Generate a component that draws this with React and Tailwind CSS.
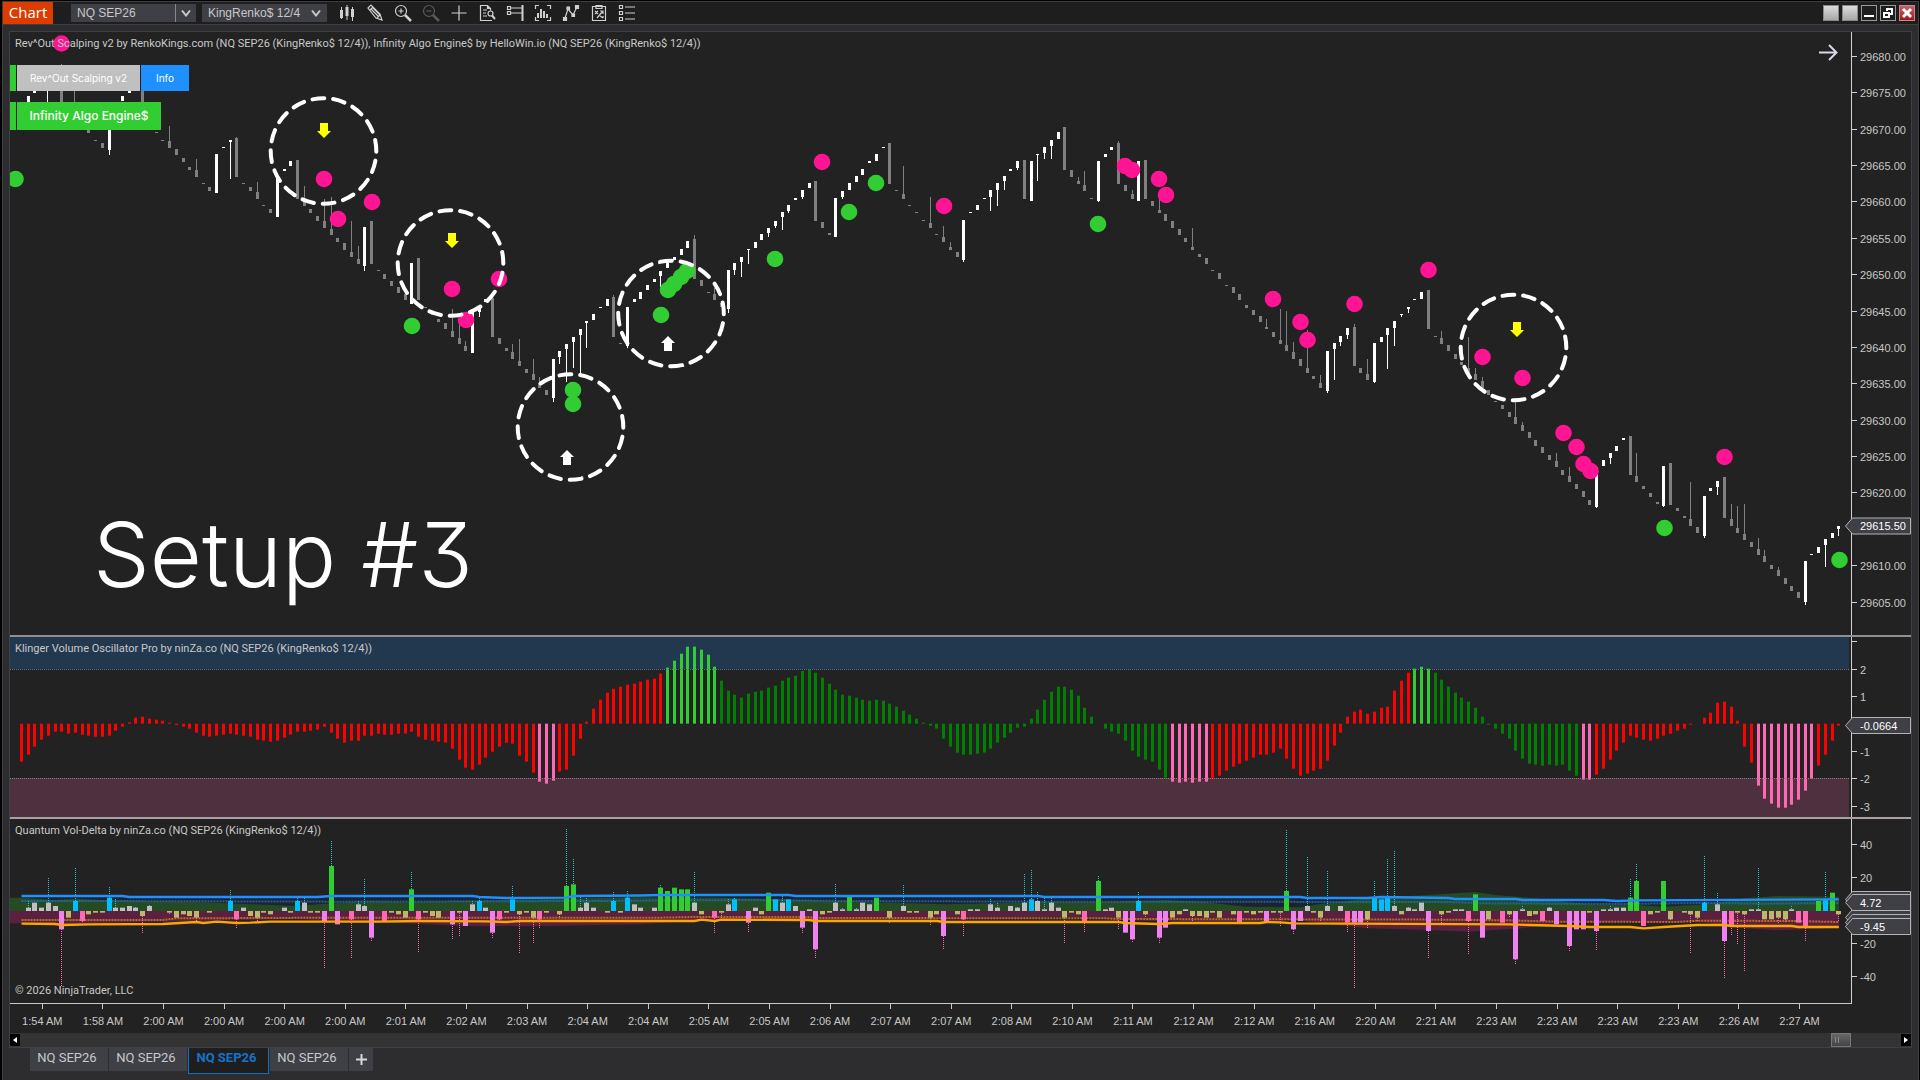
import React, { useState } from 'react'

const BAR_START = 21.5
const BAR_STEP = 6.731
const barX = i => BAR_START + i * BAR_STEP
// wicks are one pixel wide, so they sit on whole pixels
const wickX = i => Math.floor(barX(i)) + 0.5

// rows: [bar index, body top, body bottom, wick end]
const UP = [
  [1, 96, 102], [2, 90, 93], [13, 128, 150, 155], [15, 96, 101], [16, 90, 93], [29, 154, 193], [30, 147, 148],
  [31, 140, 142, 179], [38, 177, 217], [39, 169, 171], [40, 161, 166], [51, 227, 266, 271], [58, 263, 304],
  [67, 312, 353], [68, 308, 312, 317], [69, 299, 302], [79, 359, 398, 402], [80, 351, 357, 364], [81, 344, 349, 382],
  [82, 337, 342, 368], [83, 329, 335, 373], [84, 321, 323, 348], [85, 314, 320], [86, 307, 308], [87, 299, 306],
  [90, 307, 346, 348], [91, 299, 302], [92, 292, 299], [93, 285, 290], [94, 279, 282], [95, 271, 276, 287],
  [96, 262, 268], [97, 257, 260], [98, 249, 255], [99, 241, 248], [105, 270, 309, 313], [106, 263, 270, 275],
  [107, 257, 262, 277], [108, 249, 250, 264], [109, 242, 248], [110, 234, 240], [111, 228, 233, 237],
  [112, 221, 226, 228], [113, 212, 217, 230], [114, 205, 211, 213], [115, 198, 200], [116, 190, 197, 199],
  [117, 183, 188], [121, 198, 237], [122, 191, 197, 199], [123, 183, 190], [124, 176, 182], [125, 169, 175],
  [126, 161, 163], [127, 154, 161], [128, 147, 148], [140, 220, 260, 262], [141, 212, 213], [142, 205, 210],
  [143, 198, 199], [144, 190, 197, 211], [145, 183, 190, 206], [146, 176, 181, 190], [147, 169, 171],
  [148, 161, 168, 170], [150, 161, 201], [151, 154, 155, 181], [152, 147, 153, 159], [153, 140, 146, 159],
  [154, 132, 139], [160, 161, 201, 202], [161, 154, 157], [162, 147, 150], [166, 161, 201], [194, 351, 391, 393],
  [195, 343, 349, 380], [196, 336, 342, 346], [197, 328, 335, 339], [201, 343, 382, 383], [202, 337, 342],
  [203, 328, 335, 369], [204, 321, 328, 346], [205, 314, 315, 317], [206, 307, 309, 313], [207, 299, 300],
  [208, 292, 299], [234, 467, 507, 508], [235, 460, 466], [236, 453, 458, 464], [237, 446, 451], [238, 438, 440],
  [244, 466, 506, 507], [250, 496, 536, 538], [251, 488, 491], [252, 481, 487, 495], [265, 561, 602, 605],
  [266, 554, 555], [267, 547, 553], [268, 539, 545, 567], [269, 533, 538], [270, 526, 529, 536],
]

const DOWN = [
  [6, 90, 102, 64], [10, 130, 133], [11, 140, 141], [12, 143, 148], [18, 90, 102], [20, 132, 133], [21, 140, 141],
  [22, 141, 148, 126], [23, 149, 155], [24, 158, 162], [25, 167, 170], [26, 170, 177, 159], [27, 183, 184],
  [28, 187, 191], [32, 138, 177, 137], [33, 183, 184], [34, 187, 191], [35, 192, 199, 182], [36, 205, 206],
  [37, 209, 213], [41, 160, 199], [42, 199, 206, 186], [43, 209, 213], [44, 216, 221], [45, 221, 228, 199],
  [46, 229, 235, 197], [47, 238, 242], [48, 243, 250], [49, 252, 257, 221], [50, 259, 264, 246], [52, 221, 264],
  [53, 270, 271], [54, 274, 279], [55, 281, 286], [56, 287, 293], [57, 294, 300], [59, 258, 300], [60, 307, 308],
  [61, 311, 315], [62, 319, 322], [63, 323, 329], [64, 331, 337, 309], [65, 338, 344, 320], [66, 346, 351, 341],
  [70, 298, 337], [71, 338, 344], [72, 348, 351], [73, 352, 359, 344], [74, 361, 366, 339], [75, 369, 373],
  [76, 374, 380, 359], [77, 383, 388, 377], [78, 390, 395], [88, 297, 337, 295], [89, 343, 344], [100, 239, 279, 235],
  [101, 280, 286], [102, 292, 293], [103, 294, 300, 288], [104, 303, 307], [118, 181, 221], [119, 222, 228],
  [120, 233, 235], [129, 143, 184], [130, 190, 191], [131, 194, 199, 166], [132, 205, 206], [133, 212, 213],
  [134, 220, 221], [135, 223, 228, 197], [136, 234, 235], [137, 237, 242, 226], [138, 247, 250, 242],
  [139, 252, 257], [149, 160, 199], [155, 127, 170], [156, 170, 177], [157, 181, 184, 177], [158, 185, 191, 171],
  [159, 198, 199], [163, 143, 184, 141], [164, 185, 191], [165, 194, 199, 190], [167, 160, 199], [168, 201, 206],
  [169, 210, 213, 198], [170, 214, 221], [171, 221, 228], [172, 229, 235], [173, 238, 242], [174, 247, 250, 228],
  [175, 254, 257], [176, 258, 264], [177, 270, 271], [178, 273, 279], [179, 285, 286], [180, 287, 293],
  [181, 294, 300], [182, 305, 308], [183, 310, 315], [184, 316, 322], [185, 327, 329, 319], [186, 332, 337],
  [187, 340, 344, 309], [188, 345, 351, 311], [189, 352, 359, 342], [190, 359, 366], [191, 368, 373, 330],
  [192, 376, 379], [193, 383, 388, 375], [198, 327, 366, 324], [199, 368, 373], [200, 374, 380, 359],
  [209, 290, 329], [210, 336, 337], [211, 338, 344, 331], [212, 345, 351], [213, 354, 359], [214, 362, 365],
  [215, 368, 374, 337], [216, 374, 380, 368], [217, 381, 388, 377], [218, 390, 395], [219, 401, 402],
  [220, 405, 409], [221, 412, 417], [222, 417, 424, 402], [223, 425, 431, 422], [224, 432, 438], [225, 440, 446],
  [226, 447, 453], [227, 455, 460], [228, 461, 467, 453], [229, 470, 475], [230, 476, 482, 467], [231, 484, 489],
  [232, 491, 497], [233, 500, 505], [239, 436, 475], [240, 476, 482, 453], [241, 486, 489], [242, 493, 497],
  [243, 502, 504], [245, 463, 505], [246, 508, 511], [247, 516, 518], [248, 519, 526, 482], [249, 527, 533],
  [253, 477, 518], [254, 519, 526, 504], [255, 528, 533, 506], [256, 534, 540, 504], [257, 542, 547],
  [258, 549, 555, 538], [259, 556, 562, 550], [260, 565, 569], [261, 570, 576, 567], [262, 578, 584],
  [263, 586, 591], [264, 592, 598],
]

const PINK_DOTS = [
  [61.5, 43.5], [324, 179], [372, 202], [338, 219], [452, 289], [499, 279], [466, 320], [822, 162],
  [944, 206], [1125, 166], [1132, 170], [1159, 179], [1166, 195], [1273, 299], [1300.5, 322], [1307.5, 340],
  [1354.5, 304], [1428.5, 270], [1482.5, 357], [1522.5, 378], [1563.5, 433], [1576.5, 447], [1583.5, 464], [1590.5, 471],
  [1724.5, 457],
]

const GREEN_DOTS = [
  [15.5, 179], [412, 326], [573, 390], [573, 404], [661, 315], [668, 290], [674, 284], [681, 277], [687, 271],
  [775, 259], [849, 212], [876, 183], [1098, 224], [1664.5, 528], [1839.5, 560],
]

const RINGS = [[323.5, 151], [450.5, 263], [570.5, 427], [671, 313.5], [1513.5, 347.5]]
const SELL_ARROWS = [[324, 123], [452, 233], [1517, 322]]
const BUY_ARROWS = [[567, 450], [668, 336]]

// oscillator columns, bottom or top end of each bar in thirds of a pixel
const KLINGER_ZERO = 281
const KLINGER = [
  395, 374, 350, 329, 317, 305, 305, 311, 308, 314, 317, 320, 320, 317, 302, 290, 277, 263, 260, 266, 269, 272, 278,
  285, 290, 296, 308, 317, 320, 317, 314, 311, 314, 317, 320, 329, 332, 335, 332, 323, 314, 305, 305, 302, 299, 290,
  308, 326, 338, 332, 332, 317, 317, 311, 314, 314, 311, 311, 305, 320, 329, 332, 335, 338, 356, 389, 413, 419, 404,
  383, 365, 350, 338, 341, 377, 395, 428, 455, 461, 452, 425, 419, 377, 326, 275, 236, 209, 188, 176, 170, 164, 161,
  155, 149, 146, 131, 113, 92, 71, 50, 50, 59, 74, 110, 152, 182, 194, 203, 191, 185, 182, 173, 167, 152, 143, 137,
  123, 119, 128, 143, 161, 179, 194, 197, 203, 209, 212, 209, 212, 221, 230, 242, 254, 266, 278, 287, 296, 326, 350,
  368, 374, 374, 371, 368, 356, 338, 323, 308, 293, 290, 266, 239, 209, 185, 170, 170, 179, 197, 233, 260, 281, 296,
  305, 311, 332, 362, 380, 389, 395, 419, 443, 455, 458, 455, 458, 455, 455, 446, 437, 422, 410, 401, 392, 383, 374,
  374, 368, 356, 386, 416, 437, 431, 422, 416, 392, 347, 308, 260, 245, 239, 251, 245, 233, 230, 182, 152, 128, 116,
  110, 116, 128, 149, 170, 188, 203, 215, 233, 260, 284, 296, 311, 326, 362, 386, 401, 404, 407, 404, 407, 404, 422,
  437, 449, 449, 434, 416, 389, 362, 338, 317, 323, 329, 332, 326, 317, 311, 302, 296, 284, 281, 263, 248, 218, 215,
  230, 272, 350, 398, 467, 506, 521, 533, 533, 524, 509, 482, 446, 407, 374, 332, 287,
]

const klingerColor = i => {
  if ((i >= 77 && i <= 79) || (i >= 171 && i <= 176) || i === 232 || i === 233 || (i >= 258 && i <= 266)) return '#ff69b4'
  if ((i >= 96 && i <= 103) || (i >= 207 && i <= 209)) return '#32cd32'
  if ((i >= 104 && i <= 170) || (i >= 210 && i <= 231)) return '#008000'
  return '#ff0000'
}

const DELTA_COLORS = { g: '#32cd32', b: '#00bfff', s: '#c0c0c0', v: '#ee82ee', h: '#ff69b4', k: '#bdb76b' }

// rows: [bar index, color key, delta, extreme delta]
const DELTA = [
  [1, 's', 2, 6], [2, 's', 5], [3, 's', 2], [4, 's', 5, 20], [5, 's', 3], [6, 'v', -11, -45], [7, 'k', -4],
  [8, 'b', 6, 26], [9, 'h', -6, -7], [10, 'k', -2], [11, 'k', -1], [12, 'k', -1], [13, 'b', 8, 15], [14, 's', 2, 7],
  [15, 's', 2], [16, 's', 3], [17, 's', 2, 3], [18, 'k', -3, -13], [19, 's', 3, 4], [22, 'k', -1, -2], [23, 'k', -4],
  [24, 'k', -2], [25, 'k', -3], [26, 'k', -4, -6], [28, 'k', -1], [31, 'b', 6, 13], [32, 'h', -5, -11], [33, 's', 2],
  [34, 'k', -3], [35, 'k', -4, -6], [36, 'k', -1], [37, 'k', -2], [39, 's', 2], [40, 'k', -1], [41, 'b', 6, 8],
  [42, 's', 5, 8], [43, 'k', -1], [44, 'k', -1], [45, 'v', -6, -34], [46, 'g', 27, 42], [47, 'v', -8],
  [49, 'h', -5, -28], [50, 's', 4, 6], [51, 's', 3, 19], [52, 'v', -16, -18], [54, 'h', -6], [55, 'k', -1],
  [56, 'k', -2], [57, 'k', -4], [58, 'g', 13, 24], [59, 'h', -5, -25], [60, 'k', -1], [61, 'k', -3], [62, 'k', -4],
  [64, 'v', -8, -17], [65, 'k', -1, -15], [66, 'v', -9], [67, 's', 4, 6], [68, 'b', 6, 9], [69, 's', 2],
  [70, 'v', -13, -17], [71, 'h', -5, -7], [72, 'k', -1], [73, 'b', 7, 15], [74, 'k', -2, -26], [75, 'k', -1],
  [76, 'k', -4, -19], [77, 'h', -5, -11], [78, 'k', -1], [80, 'k', -2, -4], [81, 'g', 15, 49], [82, 'g', 16, 31],
  [83, 's', 2, 10], [84, 's', 5, 8], [85, 's', 2], [87, 'k', -1], [88, 'b', 6, 12], [89, 'k', -1], [90, 'b', 8, 12],
  [91, 's', 4], [92, 's', 2], [94, 's', 2], [95, 'g', 14, 16], [96, 'g', 12], [97, 'g', 14], [98, 'g', 13],
  [99, 'g', 13], [100, 's', 5, 24], [101, 'k', -2], [103, 'h', -4, -13], [104, 'k', -1, -4], [105, 's', 4, 8],
  [106, 'b', 7, 8], [108, 'v', -7, -13], [109, 's', 2], [110, 'k', -2], [111, 'g', 11], [112, 'b', 7],
  [113, 's', 5, 10], [114, 'b', 7], [115, 's', 3], [116, 'v', -10, -14], [117, 's', 1], [118, 'v', -23, -29],
  [119, 'k', -2], [120, 'k', -1], [121, 's', 5, 16], [122, 's', 1, 2], [123, 'g', 9, 10], [124, 's', 1, 2],
  [125, 's', 5], [126, 's', 4], [127, 'g', 8], [129, 'k', -4, -8], [131, 's', 3, 16], [132, 'k', -1], [133, 'k', -1],
  [135, 'k', -4, -9], [136, 'k', -2], [137, 'v', -15, -23], [139, 'k', -2], [140, 'h', -5, -15], [141, 's', 1],
  [142, 's', 1], [144, 's', 4, 7], [145, 's', 2, 5], [147, 's', 3], [148, 's', 2, 3], [149, 's', 5, 23],
  [150, 'b', 7, 25], [151, 's', 6, 12], [152, 's', 1, 8], [153, 's', 5, 8], [154, 's', 2], [155, 'k', -4, -19],
  [156, 'k', -1], [157, 'k', -2], [158, 'h', -6, -13], [160, 'g', 18, 21], [161, 's', 1], [162, 's', 2],
  [163, 'k', -4, -11], [164, 'v', -13], [165, 'v', -17, -19], [166, 'b', 6, 12], [167, 'k', -2, -4],
  [169, 'v', -16, -20], [170, 'v', -10], [171, 'k', -4], [172, 'k', -2], [173, 's', 1], [174, 'k', -3, -8],
  [175, 'k', -3], [176, 'k', -4], [177, 'k', -1], [178, 'k', -4], [180, 'k', -2], [181, 'h', -7], [182, 'k', -1],
  [183, 'k', -2], [184, 'k', -1], [185, 'v', -6], [186, 'k', -1], [187, 'k', -1, -9], [188, 'g', 12, 49],
  [189, 'v', -11, -14], [190, 'v', -6], [191, 's', 3, 33], [192, 'k', -1], [193, 'k', -4, -6], [194, 's', 3, 24],
  [196, 's', 3], [197, 'h', -7, -13], [198, 'v', -7, -47], [199, 'v', -7], [200, 'k', -5, -11], [201, 'b', 8, 18],
  [202, 'b', 7], [203, 'b', 8, 32], [204, 's', 3, 36], [205, 'k', -2], [206, 's', 2, 3], [207, 's', 1], [208, 's', 5],
  [209, 'v', -12, -28], [211, 'k', -2, -7], [212, 'k', -1], [213, 's', 1], [214, 's', 1], [215, 'h', -6, -26],
  [216, 'g', 10], [217, 'v', -16], [218, 'k', -5], [220, 'h', -7], [221, 'k', -2, -4], [222, 'v', -29, -32],
  [223, 's', 1, 3], [224, 'k', -3], [225, 'k', -2], [226, 'h', -6], [227, 's', 2, 3], [228, 'v', -8],
  [230, 'v', -21, -24], [231, 'v', -11], [232, 'v', -11], [233, 'k', -1], [234, 'v', -12, -24], [235, 's', 1],
  [236, 's', 1, 3], [237, 's', 2], [238, 's', 2], [239, 'g', 8, 20], [240, 'g', 18, 28], [241, 'h', -9],
  [242, 'k', -2], [243, 'k', -1], [244, 'g', 18], [245, 'k', -5, -6], [247, 'k', -1], [248, 'k', -2, -25],
  [249, 'k', -4, -6], [250, 'b', 5, 33], [252, 's', 4, 11], [253, 'v', -18, -41], [254, 'h', -9, -15],
  [255, 'k', -1, -20], [256, 'k', -2, -36], [257, 's', 1], [258, 's', 1, 26], [259, 'k', -5], [260, 'k', -5],
  [261, 'k', -4, -8], [262, 'k', -5, -7], [263, 's', 1, 3], [264, 'h', -7], [265, 'h', -9, -18], [267, 'g', 6],
  [268, 'b', 7, 24], [269, 'g', 11], [270, 'k', -2, -6],
]

const BLUE_LINE = [
  [0, 9], [15, 9], [16, 8.4], [44, 8.4], [46, 9], [67, 9], [68, 8.4], [72, 7.8], [81, 8], [82, 9], [92, 9.3],
  [95, 9.6], [114, 9.6], [115, 9], [151, 9], [152, 8.4], [190, 8.4], [191, 7.8], [200, 7.8], [202, 8.4], [212, 7.8],
  [213, 7.2], [222, 7.2], [223, 6.6], [235, 6.6], [237, 6], [240, 6.4], [270, 7],
]
const BLUE_DASH = [
  [0, 6], [12, 6], [47, 5.6], [84, 6], [108, 6.6], [123, 6], [151, 5.6], [212, 5.4], [217, 4.6], [237, 4.2],
  [250, 4.8], [259, 4.4], [270, 4.8],
]
const ORANGE_LINE = [
  [0, -7.6], [5, -7.8], [6, -8.4], [10, -8], [21, -7.8], [26, -6.6], [27, -7.2], [29, -6.4], [32, -7.2], [34, -7],
  [37, -6.4], [53, -6.4], [59, -6], [69, -6.2], [72, -6.6], [74, -6], [100, -6], [101, -5.2], [103, -6], [104, -5.2],
  [117, -5.4], [118, -6], [136, -6], [137, -6.6], [163, -6.6], [164, -7.2], [169, -7.8], [171, -7.2], [184, -7.2],
  [185, -6.6], [187, -6.8], [189, -7.4], [221, -8], [224, -8.4], [230, -9], [233, -9.6], [239, -9.6], [241, -10.4],
  [244, -9.6], [249, -8.4], [253, -8.4], [254, -9], [263, -9], [264, -9.6], [270, -9.6],
]
const ORANGE_DASH = [
  [0, -5.4], [21, -5.4], [23, -4.4], [48, -4], [95, -4], [100, -3.6], [116, -3.6], [119, -4.2], [161, -4.4],
  [163, -4.8], [212, -5.2], [221, -5.6], [228, -6.4], [246, -6.6], [249, -5.8], [263, -6], [270, -6.6],
]
const BUY_AREA = [
  [-2, 8], [0, 8], [5, 6.6], [8, 7.4], [12, 6.6], [27, 5.2], [37, 3.6], [41, 3], [44, 4], [52, 6], [57, 5.2],
  [70, 6.4], [78, 7.2], [92, 8.2], [104, 8], [118, 6.4], [127, 5.2], [137, 4], [151, 5.2], [160, 5.2], [170, 6.6],
  [176, 5.2], [182, 2.6], [190, 2.2], [192, 3.6], [200, 7.6], [209, 9.6], [216, 11.4], [219, 9.6], [225, 7.6],
  [230, 5.2], [234, 3.6], [240, 3.6], [244, 2.6], [250, 4], [256, 7.6], [261, 9], [270, 8.6],
]
const SELL_AREA = [
  [-2, -7.4], [6, -8], [16, -6.8], [27, -6], [40, -4.8], [47, -6], [57, -7.4], [66, -9], [78, -9], [92, -8],
  [101, -5.6], [123, -5.2], [148, -4.8], [154, -3.4], [167, -6], [180, -6], [190, -5.6], [193, -7.4], [200, -10.4],
  [209, -11.4], [215, -12.4], [223, -10.4], [228, -7.4], [240, -6.8], [250, -6.8], [256, -10.4], [261, -11.6],
  [270, -10],
]

const TIMES = [
  '1:54 AM', '1:58 AM', '2:00 AM', '2:00 AM', '2:00 AM', '2:00 AM', '2:01 AM', '2:02 AM', '2:03 AM', '2:04 AM',
  '2:04 AM', '2:05 AM', '2:05 AM', '2:06 AM', '2:07 AM', '2:07 AM', '2:08 AM', '2:10 AM', '2:11 AM', '2:12 AM',
  '2:12 AM', '2:16 AM', '2:20 AM', '2:21 AM', '2:23 AM', '2:23 AM', '2:23 AM', '2:23 AM', '2:26 AM', '2:27 AM',
]

const DELTA_ZERO = 911
const deltaY = v => DELTA_ZERO - (v * 5) / 3
const line = points => points.map(([i, v]) => `${barX(i)},${deltaY(v)}`).join(' ')
const area = points => `${barX(-2)},${DELTA_ZERO} ${line(points)} ${barX(270)},${DELTA_ZERO}`

function Candles({ rows, color }) {
  return (
    <g fill={color}>
      {rows.map(([i, top, bottom, wick]) => (
        <g key={i}>
          <rect x={wickX(i) - 1.5} y={top} width={3} height={bottom - top} />
          {wick && <rect x={wickX(i) - 0.5} y={Math.min(wick, top)} width={1} height={Math.abs(wick - top)} />}
        </g>
      ))}
    </g>
  )
}

function PriceChart() {
  return (
    <svg className="block w-full" height={603} viewBox="10 32 1841 603" preserveAspectRatio="none">
      <Candles rows={DOWN} color="#808080" />
      <Candles rows={UP} color="#ffffff" />
      <rect x={47} y={90} width={1} height={12} fill="#fff" />
      <rect x={74} y={90} width={1} height={12} fill="#808080" />
      {PINK_DOTS.map(([x, y]) => <circle key={`${x}-${y}`} cx={x} cy={y} r={8.3} fill="#ff1493" />)}
      {GREEN_DOTS.map(([x, y]) => <circle key={`${x}-${y}`} cx={x} cy={y} r={8.3} fill="#32cd32" />)}
      {SELL_ARROWS.map(([x, y]) => (
        <path key={x} d={`M${x - 4} ${y}h8v8h3l-7 7l-7 -7h3z`} fill="#ffff00" />
      ))}
      {BUY_ARROWS.map(([x, y]) => (
        <path key={x} d={`M${x} ${y}l7 7h-3v8h-8v-8h-3z`} fill="#ffffff" />
      ))}
      {RINGS.map(([x, y]) => (
        <circle key={x} cx={x} cy={y} r={52.8} fill="none" stroke="#fff" strokeWidth={4} strokeLinecap="round"
          pathLength={320} strokeDasharray="11.5 8.5" transform={`rotate(-12 ${x} ${y})`} />
      ))}
    </svg>
  )
}

function KlingerChart() {
  return (
    <svg className="block w-full" height={180} viewBox="10 637 1841 180" preserveAspectRatio="none">
      <rect x={10} y={637} width={1839} height={32} fill="#22384f" />
      <rect x={10} y={778} width={1839} height={39} fill="#4f303e" />
      {KLINGER.map((v, i) => {
        const top = Math.min(v, KLINGER_ZERO) / 3 + 630
        const height = Math.abs(v - KLINGER_ZERO) / 3
        return <rect key={i} x={wickX(i) - 1.5} y={top} width={3} height={height} fill={klingerColor(i)} />
      })}
      <path d="M10 669.5H1849" stroke="#5f7285" strokeDasharray="1 1" />
      <path d="M10 778.5H1849" stroke="#8a7a80" strokeDasharray="1 1" />
    </svg>
  )
}

function DeltaChart() {
  return (
    <svg className="block w-full" height={184} viewBox="10 819 1841 184" preserveAspectRatio="none">
      <polygon points={`${line(BLUE_LINE)} ${barX(270)},911 ${barX(0)},911`} fill="#1e222c" />
      <polygon points={area(BUY_AREA)} fill="#254a24" />
      <polygon points={area(SELL_AREA)} fill="#5a2040" />
      <g fill="none" strokeWidth={2} strokeDasharray="2 1" strokeOpacity={0.75}>
        <polyline points={line(BLUE_DASH)} stroke="#1e74cc" />
        <polyline points={line(ORANGE_DASH)} stroke="#e0861c" />
      </g>
      {DELTA.map(([i, c, v, wick]) => {
        const x = wickX(i)
        return (
          <g key={i}>
            {wick && (
              <path d={`M${x} ${Math.round(deltaY(v))}V${Math.round(deltaY(wick))}`}
                stroke={wick > 0 ? '#22c8c8' : '#ff69b4'} strokeDasharray="1 1" />
            )}
            <rect x={x - 2.5} y={Math.min(deltaY(v), DELTA_ZERO)} width={5} height={(Math.abs(v) * 5) / 3}
              fill={DELTA_COLORS[c]} />
          </g>
        )
      })}
      <g fill="none" strokeWidth={2.4}>
        <polyline points={line(BLUE_LINE)} stroke="#1e90ff" />
        <polyline points={line(ORANGE_LINE)} stroke="#ffa500" />
      </g>
    </svg>
  )
}

function Tag({ y, label }) {
  return (
    <g>
      <path d={`M1845.5 ${y}L1852.5 ${y - 8}H1910.5V${y + 8}H1852.5Z`} fill="#3f3f46" stroke="#b4b4b4" />
      {label && <text x={1860} y={y + 4} fill="#ffffff">{label}</text>}
    </g>
  )
}

function Axis({ top, height, ticks, children }) {
  return (
    <div className="w-[60px] shrink-0 border-l border-[#d0d0d0]">
      <svg className="block overflow-visible text-[11px]" width={59} height={height} viewBox={`1852 ${top} 59 ${height}`}>
        {ticks.map(([y, label]) => (
          <g key={y}>
            <path d={`M1852 ${y}h5`} stroke="#d0d0d0" />
            <text x={1860} y={y + 4} fill="#c8c8c8">{label}</text>
          </g>
        ))}
        {children}
      </svg>
    </div>
  )
}

const PRICE_TICKS = Array.from({ length: 16 }, (_, k) => [Math.round(57 + k * 36.37) - 0.5, (29680 - k * 5).toFixed(2)])
  .filter(([, label]) => label !== '29615.00')

const TOOLS = [
  { name: 'Chart style', d: <><path d="M3.500 3v12M9 1v15M14.500 3v14" strokeWidth={1} /><path d="M3.500 6v8M9 3v9M14.500 5v8" strokeWidth={3} /></> },
  { name: 'Drawing tools', d: <><path d="M2 4l3-3 9 9 2 6-6-2z" /><path d="M4 6l3-3M5 5l8 8M7 4l7 7M11 14l3-3" /></> },
  { name: 'Zoom in', d: <><circle cx={7} cy={7} r={5.500} /><path d="M4.500 7h5M7 4.500v5" /><path d="M11 11l6 6" strokeWidth={2.500} /></> },
  { name: 'Zoom out', dim: true, d: <><circle cx={7} cy={7} r={5.500} /><path d="M4.500 7h5" /><path d="M11 11l6 6" strokeWidth={2.500} /></> },
  { name: 'Crosshair', d: <path d="M9 1.500v15M1.500 9h15" /> },
  { name: 'Data box', d: <><path d="M14 16.500H2.500v-15h7l3 3v2M9.500 1.500v3h3M5 6h4M5 9h3M5 12h4" /><circle cx={12.500} cy={9.500} r={2.500} /><path d="M14 11.500l3 3.500" strokeWidth={2} /></> },
  { name: 'Chart trader', d: <><path d="M1.500 2.500h3v3h-3zM1.500 7.500h3v3h-3zM5 4h11M5 9h11" /><path d="M16.500 1v16" strokeWidth={2} /></> },
  { name: 'Indicators', d: <><path d="M1.500 5v-3.500H5M13 1.500h3.500V5M16.500 13v3.500H13M5 16.500H1.500V13" /><path d="M4 9v5M7 5v9M10 7v7M13 10v4" strokeWidth={2} /></> },
  { name: 'Strategies', d: <><path d="M3 14L6 5l5 6 4-8" /><path d="M1.500 13.500h3v3h-3zM5 3h2.500v2.500H5zM10 10h2.500v2.500H10zM13.500 1.500h3v3h-3z" fill="currentColor" /></> },
  { name: 'Templates', d: <><path d="M2.500 2.500h13v14h-13zM6 1.500h6v3H6z" /><path d="M5 7l3 3M8 7l-3 3M10 7h3v3M13 7l-6 7M10 12l3 2M13 12v2" /></> },
  { name: 'Properties', d: <path d="M1.500 1.500h3v3h-3zM1.500 7.500h3v3h-3zM1.500 13.500h3v3h-3zM7 3h10M7 9h10M7 15h10" /> },
]

function TitleBar() {
  return (
    <header className="flex items-center h-[23px] bg-[#1e1e1e] border-b border-[#3f3f43]">
      <h1 className="w-[50px] h-full bg-[#dc3c00] text-white text-[15px] leading-[21px] text-center font-['Open_Sans',sans-serif]">Chart</h1>
      <div className="flex ml-[18px] h-[18px] bg-[#3f3f46] text-[#c8c8c8]">
        <input aria-label="Instrument" defaultValue="NQ SEP26"
          className="w-[105px] pl-1.5 text-xs bg-transparent border-r border-[#8a8a8a] outline-none" />
        <button aria-label="Pick instrument" className="w-5 flex items-center justify-center">
          <svg width="10" height="8" fill="none" stroke="currentColor" strokeWidth={2}><path d="M1 1.500l4 5 4-5" /></svg>
        </button>
      </div>
      <div className="relative ml-1.5">
        <select aria-label="Interval" className="block appearance-none w-[125px] h-[18px] pl-1.5 text-xs bg-[#3f3f46] text-[#c8c8c8]">
          <option>KingRenko$ 12/4</option>
        </select>
        <svg className="absolute right-1.5 top-[5px] pointer-events-none" width="10" height="8" fill="none" stroke="#c8c8c8" strokeWidth={2}>
          <path d="M1 1.500l4 5 4-5" />
        </svg>
      </div>
      <div className="flex gap-2.5 ml-[11px]">
        {TOOLS.map(tool => (
          <button key={tool.name} aria-label={tool.name} className={tool.dim ? 'text-[#5a5a5a]' : 'text-[#d0d0d0]'}>
            <svg width="18" height="18" viewBox="0 0 18 18" fill="none" stroke="currentColor" strokeWidth={1.200}>{tool.d}</svg>
          </button>
        ))}
      </div>
      <div className="flex gap-[3px] ml-auto mr-[3px]">
        <button aria-label="Link instrument" className="w-4 h-4 border border-[#888] bg-linear-to-b from-[#dcdcdc] to-[#a8a8a8]" />
        <button aria-label="Link interval" className="w-4 h-4 border border-[#888] bg-linear-to-b from-[#dcdcdc] to-[#a8a8a8]" />
        <button aria-label="Minimize" className="w-4 h-4 border border-[#999] bg-[#1e1e1e] flex justify-center items-end pb-[3px]">
          <span className="w-2.5 h-[2px] bg-white" />
        </button>
        <button aria-label="Restore" className="w-4 h-4 border border-[#999] bg-[#1e1e1e]">
          <svg width="14" height="14" fill="none" stroke="#fff" strokeWidth={2}><path d="M3 7h5v4H3zM6 5V3h5v5H9" /></svg>
        </button>
        <button aria-label="Close" className="w-4 h-4 border border-[#c88] bg-linear-to-b from-[#c06070] to-[#a01018]">
          <svg width="14" height="14" fill="none" stroke="#fff" strokeWidth={3}><path d="M3 3l8 8M11 3l-8 8" /></svg>
        </button>
      </div>
    </header>
  )
}

export default function App() {
  const [tab, setTab] = useState(2)

  return (
    <div className="min-h-screen bg-black pt-px pl-[2px] pr-px flex flex-col text-[#c8c8c8] font-['Liberation_Sans',Arial,sans-serif]">
      <div className="flex-1 flex flex-col border border-[#3f3f43] bg-[#2d2d30]">
        <TitleBar />

        <main className="mx-1.5 mt-1.5 border border-[#3f3f46] bg-[#222222]">
          {/* Price */}
          <section className="relative flex border-b-2 border-[#8f8f8f]">
            <div className="flex-1 min-w-0"><PriceChart /></div>
            <Axis top={32} height={603} ticks={PRICE_TICKS}>
              <Tag y={526} label="29615.50" />
            </Axis>
            <p className="absolute left-[5px] top-1 text-[11px] leading-4 font-['Roboto',sans-serif]">
              Rev^Out Scalping v2 by RenkoKings.com (NQ SEP26 (KingRenko$ 12/4)), Infinity Algo Engine$ by HelloWin.io (NQ SEP26 (KingRenko$ 12/4))
            </p>
            <div className="absolute left-0 top-[33px] flex flex-col items-start gap-[11px] text-white font-['Inter',sans-serif]">
              <div className="flex gap-px h-[26px] text-[10px]">
                <span className="w-1.5 bg-[#32cd32]" />
                <button className="w-[123px] bg-[#c0c0c0]">Rev^Out Scalping v2</button>
                <button className="w-12 bg-[#1e90ff]">Info</button>
              </div>
              <div className="flex gap-px h-7 text-xs font-medium">
                <span className="w-1.5 bg-[#32cd32]" />
                <button className="w-36 bg-[#32cd32]">Infinity Algo Engine$</button>
              </div>
            </div>
            <button aria-label="Scroll to latest bar" className="absolute right-[73px] top-3 text-[#d8d8e8]">
              <svg width="19" height="17" fill="none" stroke="currentColor" strokeWidth={2}><path d="M0 8.500h17M10 1l7.500 7.500L10 16" /></svg>
            </button>
            <h2 className="absolute left-[83px] top-[471px] text-[90px] leading-[104px] font-[340] text-white font-['Inter',sans-serif] [font-feature-settings:'cv09']">
              Setup #3
            </h2>
          </section>

          {/* Klinger oscillator */}
          <section className="relative flex border-b-2 border-[#a8a0a4]">
            <div className="flex-1 min-w-0"><KlingerChart /></div>
            <Axis top={637} height={180}
              ticks={[[641.5, ''], [669.5, '2'], [696.5, '1'], [751.5, '-1'], [778.5, '-2'], [806.5, '-3']]}>
              <Tag y={725.5} label="-0.0664" />
            </Axis>
            <p className="absolute left-[5px] top-1 text-[11px] leading-4 font-['Roboto',sans-serif]">Klinger Volume Oscillator Pro by ninZa.co (NQ SEP26 (KingRenko$ 12/4))</p>
          </section>

          {/* Volume delta */}
          <section className="relative flex">
            <div className="flex-1 min-w-0"><DeltaChart /></div>
            <Axis top={819} height={184} ticks={[[844.5, '40'], [877.5, '20'], [943.5, '-20'], [976.5, '-40']]}>
              <Tag y={899.5} />
              <Tag y={917.5} />
              <Tag y={902.5} label="4.72" />
              <Tag y={922.5} />
              <Tag y={926.5} label="-9.45" />
            </Axis>
            <p className="absolute left-[5px] top-1 text-[11px] leading-4 font-['Roboto',sans-serif]">Quantum Vol-Delta by ninZa.co (NQ SEP26 (KingRenko$ 12/4))</p>
            <p className="absolute left-[5px] bottom-1 text-[11px] leading-4 font-['Roboto',sans-serif]">© 2026 NinjaTrader, LLC</p>
          </section>

          {/* Time axis */}
          <div className="mr-[59px] h-[30px] border-t border-[#c8c8c8] pl-0.5 pr-[22px] flex">
            {TIMES.map((time, i) => (
              <div key={i} className="flex-1 min-w-0 flex flex-col items-center text-[11px] leading-4 whitespace-nowrap">
                <span className="w-px h-[5px] mb-1 bg-[#c8c8c8]" />
                {time}
              </div>
            ))}
          </div>

          {/* Scrollbar */}
          <div className="flex h-3.5 bg-[#333333]">
            <button aria-label="Scroll left" className="w-2.5 h-3 mt-px bg-black flex items-center justify-center">
              <svg width="4" height="6" fill="#fff"><path d="M4 0v6L0 3z" /></svg>
            </button>
            <div className="ml-auto w-5 bg-linear-to-b from-[#666] to-[#444] border border-[#777] mr-[50px] flex gap-0.5 py-[3px] pl-[3px]">
              <span className="w-px bg-[#888]" /><span className="w-px bg-[#888]" />
            </div>
            <button aria-label="Scroll right" className="w-2.5 h-3 mt-px bg-black flex items-center justify-center">
              <svg width="4" height="6" fill="#fff"><path d="M0 0v6l4-3z" /></svg>
            </button>
          </div>
        </main>

        <nav className="flex items-start gap-px pl-[27px] h-8 text-[13px] font-['Roboto',sans-serif]">
          {[0, 1, 2, 3].map(i => (
            <button key={i} onClick={() => setTab(i)}
              className={i === tab
                ? 'w-[81px] h-[26px] pb-1.5 pr-1 border border-t-0 border-[#1070c0] bg-[#1e1e1e] font-bold text-[#1374c8]'
                : 'w-[78px] h-[23px] pb-[3px] pr-1 bg-[#3f3f46]'}>
              NQ SEP26
            </button>
          ))}
          <button aria-label="New tab" className="w-6 h-[23px] bg-[#3f3f46] flex items-center justify-center">
            <svg width="11" height="11" stroke="#d8d8d8" strokeWidth={2}><path d="M5.500 0v11M0 5.500h11" /></svg>
          </button>
        </nav>
      </div>
    </div>
  )
}
